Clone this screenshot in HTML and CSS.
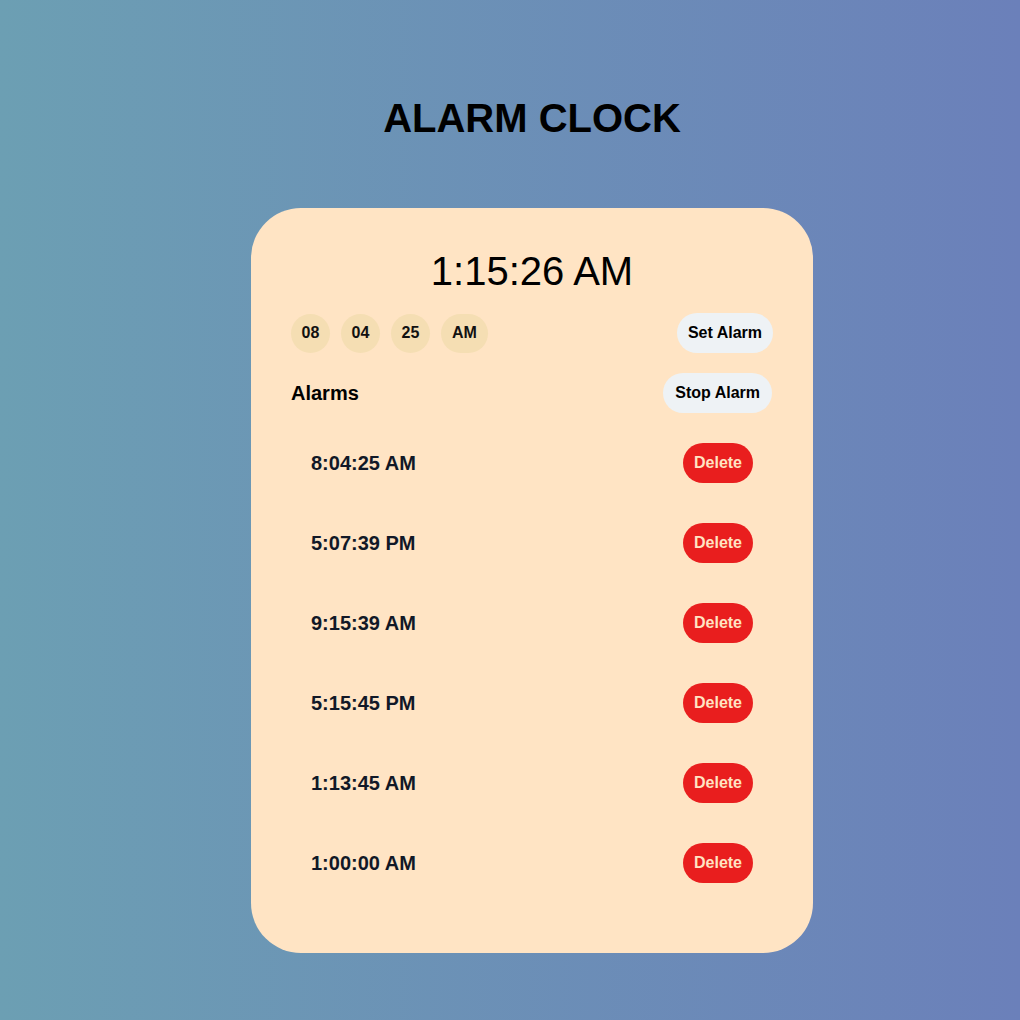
FILE: index.html
```html
<!DOCTYPE html>
<html lang="en">
<head>
<meta charset="utf-8">
<title>Alarm Clock</title>
<link rel="stylesheet" href="styles.css">
</head>
<body>
<div class="page">
  <h1 class="title">ALARM CLOCK</h1>
  <div class="card">
    <div class="clock">1:15:26 AM</div>
    <div class="set-row">
      <div class="inputs">
        <span class="pill">08</span>
        <span class="pill">04</span>
        <span class="pill">25</span>
        <span class="pill pill-wide">AM</span>
      </div>
      <button class="btn">Set Alarm</button>
    </div>
    <div class="head-row">
      <span class="alarms-label">Alarms</span>
      <button class="btn btn-stop">Stop Alarm</button>
    </div>
    <ul class="list">
      <li class="item"><span class="time">8:04:25 AM</span><button class="del">Delete</button></li>
      <li class="item"><span class="time">5:07:39 PM</span><button class="del">Delete</button></li>
      <li class="item"><span class="time">9:15:39 AM</span><button class="del">Delete</button></li>
      <li class="item"><span class="time">5:15:45 PM</span><button class="del">Delete</button></li>
      <li class="item"><span class="time">1:13:45 AM</span><button class="del">Delete</button></li>
      <li class="item"><span class="time">1:00:00 AM</span><button class="del">Delete</button></li>
    </ul>
  </div>
</div>
</body>
</html>
```

FILE: styles.css
```css
* { box-sizing: border-box; }
html, body { margin: 0; padding: 0; }
body {
  min-height: 1020px;
  background: linear-gradient(to right, #6c9fb3, #6b80ba);
  font-family: "Liberation Sans", Arial, sans-serif;
  color: #000;
}
.page {
  display: flex;
  flex-direction: column;
  align-items: center;
  padding-left: 44px;
  padding-top: 95px;
}
.title {
  margin: 0;
  font-size: 40px;
  line-height: 46px;
  font-weight: bold;
}
.card {
  margin-top: 67px;
  width: 562px;
  background: #ffe4c4;
  border-radius: 50px;
  padding: 40px 40px 40px;
}
.clock {
  text-align: center;
  font-size: 40px;
  line-height: 46px;
}
.set-row, .head-row {
  display: flex;
  justify-content: space-between;
  align-items: center;
  margin-top: 19px;
}
.head-row { margin-top: 20px; }
.inputs { display: flex; gap: 11px; }
.pill {
  height: 39px;
  min-width: 39px;
  padding: 0 8px;
  border-radius: 20px;
  background: #f5deb3;
  display: flex;
  align-items: center;
  justify-content: center;
  font-weight: bold;
  font-size: 16px;
  color: #111;
}
.pill-wide { min-width: 47px; }
.btn {
  border: none;
  height: 40px;
  padding: 0 11px;
  border-radius: 20px;
  background: #eef2f5;
  font-family: inherit;
  font-weight: bold;
  font-size: 16px;
  color: #000;
}
.btn-stop { padding: 0 12px; margin-right: 1px; }
.alarms-label {
  font-weight: bold;
  font-size: 20px;
}
.list {
  list-style: none;
  margin: 10px 0 10px;
  padding: 0;
}
.item {
  display: flex;
  justify-content: space-between;
  align-items: center;
  padding: 20px 20px;
  height: 80px;
}
.time {
  font-weight: bold;
  font-size: 20px;
  color: #111827;
}
.del {
  border: none;
  height: 40px;
  width: 70px;
  border-radius: 20px;
  background: #e91e1e;
  color: #ffe4c4;
  font-family: inherit;
  font-weight: bold;
  font-size: 16px;
  padding: 0;
}
```
